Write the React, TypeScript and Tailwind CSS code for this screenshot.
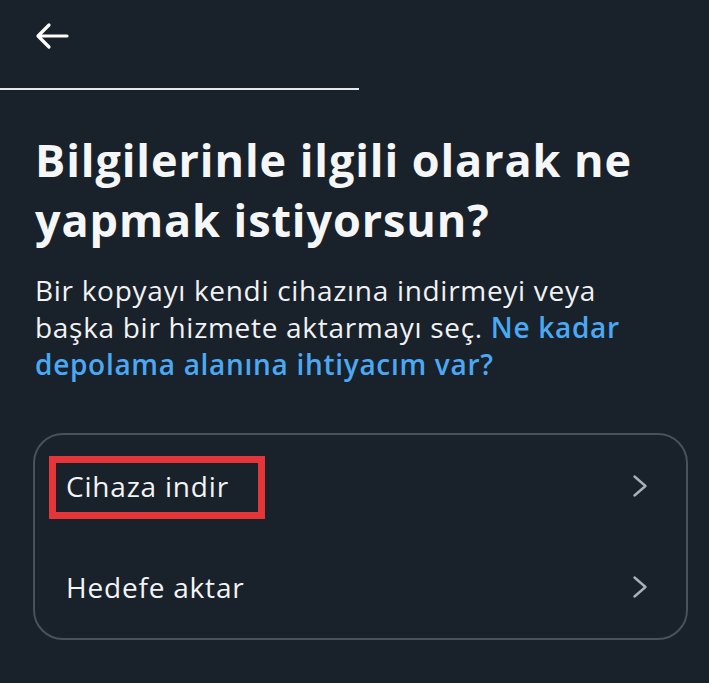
export default function App() {
  return (
    <div
      className="w-[709px] h-[683px] overflow-hidden bg-[#19212a] text-white"
      style={{ fontFamily: '"Open Sans", "Noto Sans", sans-serif' }}
    >
      {/* Top bar */}
      <div className="h-[88px] flex items-center pl-[34px]">
        <svg width="36" height="30" viewBox="0 0 36 30" fill="none" className="-mt-[17px]">
          <path
            d="M33 15H5M15 4L4 15l11 11"
            stroke="white"
            strokeWidth="3.2"
            strokeLinecap="round"
            strokeLinejoin="round"
          />
        </svg>
      </div>
      <div className="w-[359px] h-[2px] bg-[#e6e9eb]" />

      {/* Heading + description */}
      <div className="px-[35px] pt-[40px]">
        <h1 className="text-[45px] leading-[60px] font-bold tracking-[0.9px] text-[#f5f6f7]">
          Bilgilerinle ilgili olarak ne yapmak istiyorsun?
        </h1>
        <p className="mt-[22px] w-[605px] text-[28px] leading-[37px] text-[#f1f2f3] tracking-[0.7px]">
          Bir kopyayı kendi cihazına indirmeyi veya başka bir hizmete aktarmayı seç.{' '}
          <span className="text-[#4ba8f3] font-semibold">Ne kadar depolama alanına ihtiyacım var?</span>
        </p>
      </div>

      {/* Options card */}
      <div className="ml-[33px] w-[655px] mt-[50px] h-[207px] rounded-[30px] border-2 border-[#48525c] flex flex-col justify-center">
        <div className="relative h-[103px] flex items-center justify-between pl-[31px] pr-[38px]">
          <span className="text-[28px] text-[#f3f4f5] tracking-[0.8px]">Cihaza indir</span>
          <Chevron />
          <div className="absolute left-[14px] top-[21px] w-[216px] h-[63px] border-[7px] border-[#e53538]" />
        </div>
        <div className="h-[103px] flex items-center justify-between pl-[31px] pr-[38px]">
          <span className="text-[28px] text-[#f3f4f5] tracking-[0.8px]">Hedefe aktar</span>
          <Chevron />
        </div>
      </div>
    </div>
  )
}

function Chevron() {
  return (
    <svg width="16" height="24" viewBox="0 0 16 24" fill="none">
      <path
        d="M2.5 2.5L13.5 12L2.5 21.5"
        stroke="#a7b1b9"
        strokeWidth="2.4"
        strokeLinecap="round"
        strokeLinejoin="round"
      />
    </svg>
  )
}
